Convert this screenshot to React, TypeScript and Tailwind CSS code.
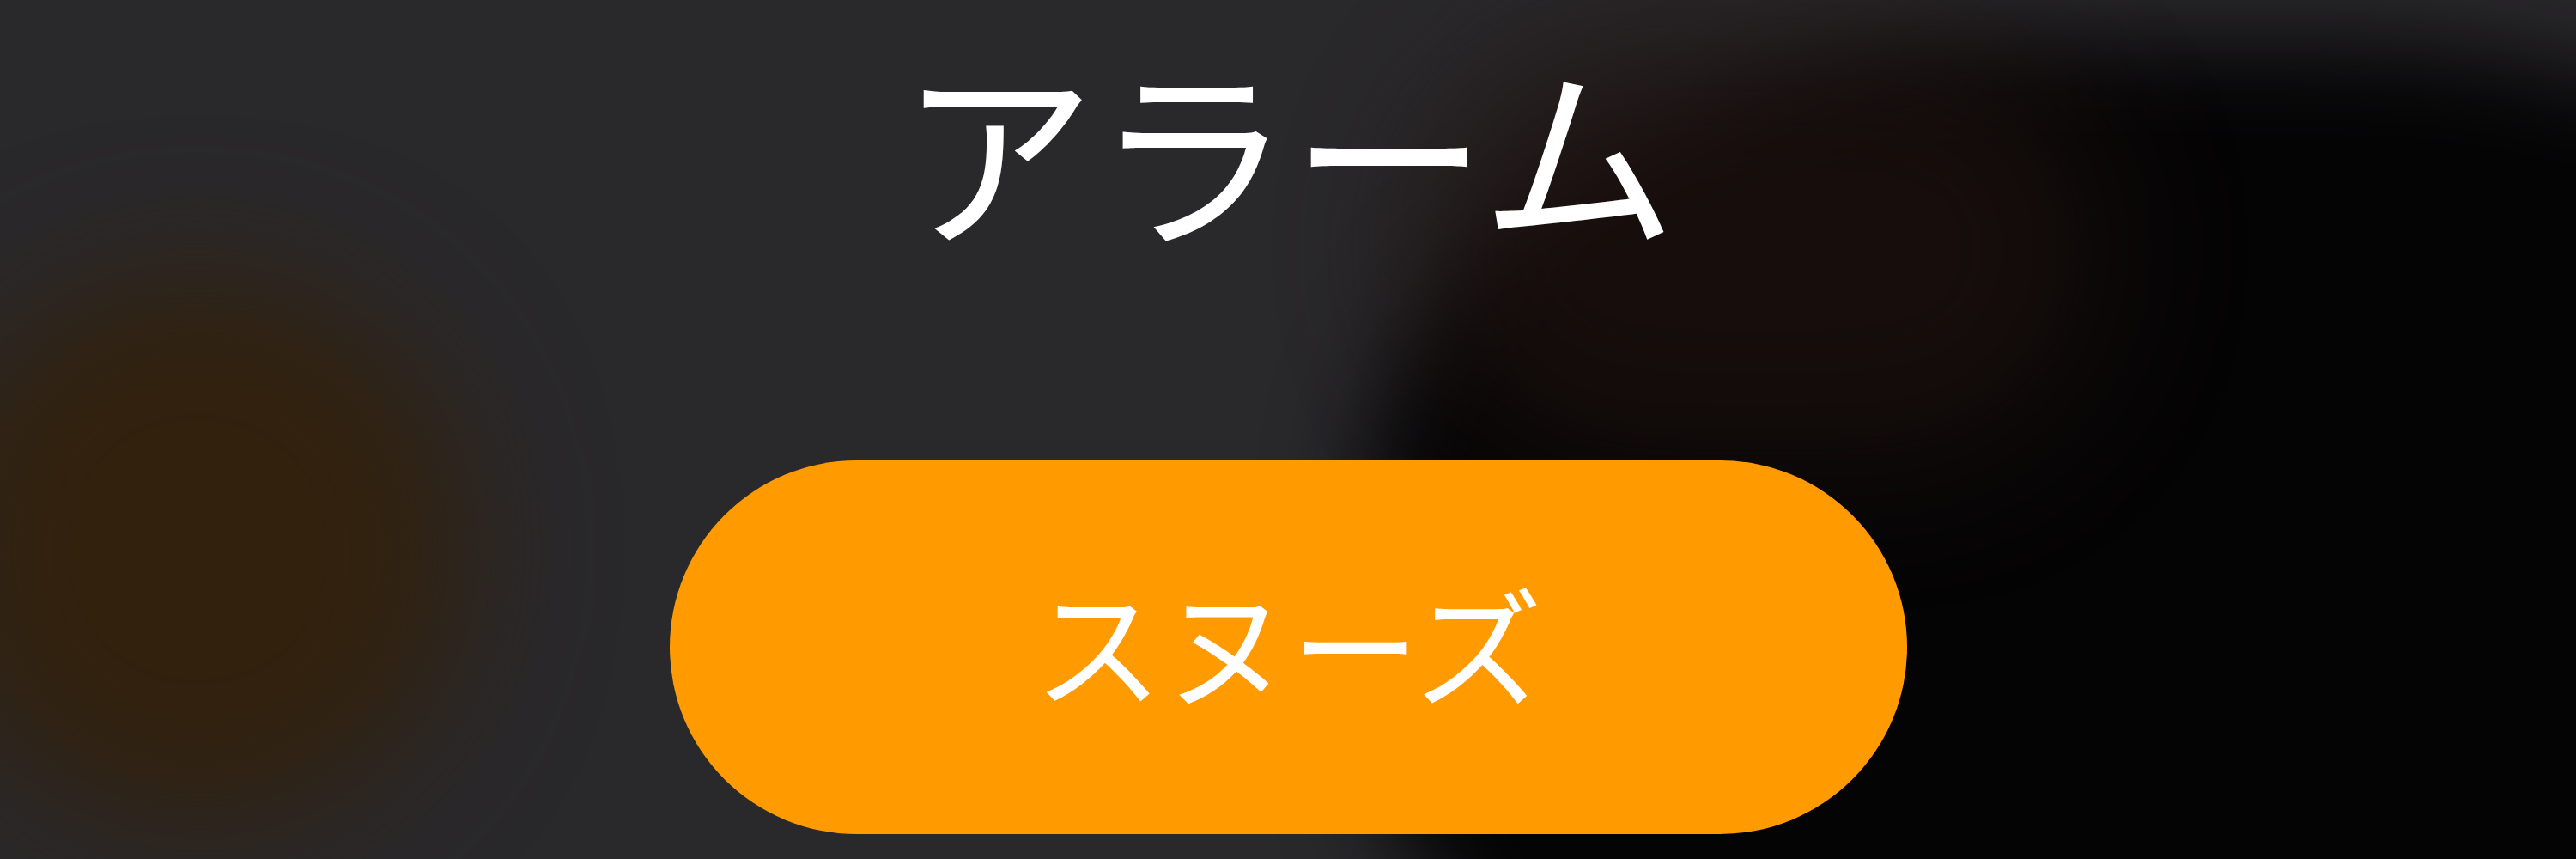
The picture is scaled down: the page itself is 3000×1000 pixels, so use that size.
export default function App() {
  return (
    <div
      className="relative h-[1000px] w-full overflow-hidden bg-[#29282b]"
      style={{ fontFamily: '"Noto Sans CJK JP", "Noto Sans", sans-serif' }}
    >
      {/* blurred wallpaper */}
      <div className="pointer-events-none absolute inset-0">
        <div className="absolute left-[-80px] top-[320px] h-[640px] w-[620px] rounded-full bg-[#32210d] blur-[80px]" />
        <div className="absolute left-[1590px] top-[50px] h-[1300px] w-[1950px] rounded-[42%] bg-[#050405] blur-[55px]" />
        <div className="absolute left-[1650px] top-[40px] h-[500px] w-[800px] rounded-full bg-[#1e120f] opacity-70 blur-[80px]" />
      </div>

      <div className="relative flex flex-col items-center pt-[58px]">
        <h1 className="text-[228px] font-normal leading-none text-white">アラーム</h1>
        <button className="mt-[250px] flex h-[435px] w-[1441px] items-center justify-center rounded-full bg-[#ff9a00] pb-[14px] text-[150px] leading-none text-white">
          スヌーズ
        </button>
      </div>
    </div>
  )
}
